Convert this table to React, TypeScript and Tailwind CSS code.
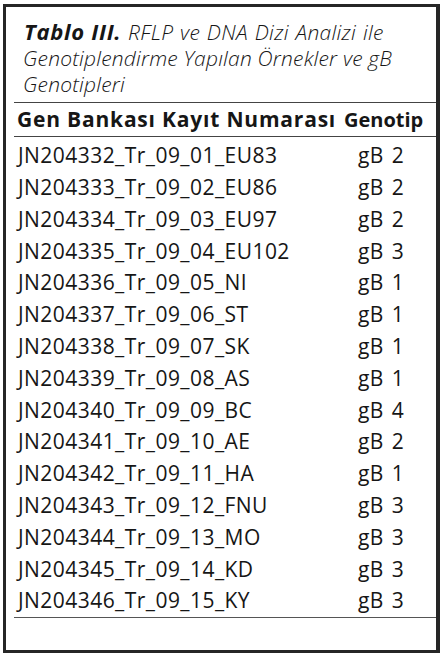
const rows: [string, string][] = [
  ['JN204332_Tr_09_01_EU83', 'gB 2'],
  ['JN204333_Tr_09_02_EU86', 'gB 2'],
  ['JN204334_Tr_09_03_EU97', 'gB 2'],
  ['JN204335_Tr_09_04_EU102', 'gB 3'],
  ['JN204336_Tr_09_05_NI', 'gB 1'],
  ['JN204337_Tr_09_06_ST', 'gB 1'],
  ['JN204338_Tr_09_07_SK', 'gB 1'],
  ['JN204339_Tr_09_08_AS', 'gB 1'],
  ['JN204340_Tr_09_09_BC', 'gB 4'],
  ['JN204341_Tr_09_10_AE', 'gB 2'],
  ['JN204342_Tr_09_11_HA', 'gB 1'],
  ['JN204343_Tr_09_12_FNU', 'gB 3'],
  ['JN204344_Tr_09_13_MO', 'gB 3'],
  ['JN204345_Tr_09_14_KD', 'gB 3'],
  ['JN204346_Tr_09_15_KY', 'gB 3'],
]

export default function App() {
  return (
    <div className="w-[444px] h-[660px] bg-white pt-[4px] pl-[3px] font-['Open_Sans',sans-serif] text-[#161616]">
      <div className="w-[437px] h-[649px] border-[3px] border-r-[4px] border-[#262626] flex flex-col">
        {/* caption */}
        <div className="pl-[17px] pr-2 pt-[11px] pb-[5px] text-[21px] leading-[26px] italic tracking-[0.2px] font-light">
          <div className="whitespace-nowrap">
            <span className="font-bold text-[22px] tracking-[0.7px] pl-[1px]">Tablo III.</span>
            <span className="tracking-[0.3px] [word-spacing:1px]"> RFLP ve DNA Dizi Analizi ile</span>
          </div>
          <div className="whitespace-nowrap">Genotiplendirme Yapılan Örnekler ve gB</div>
          <div>Genotipleri</div>
        </div>

        <div className="ml-[8px] border-t-[1.5px] border-[#444]">
          <div className="flex items-center h-[34px] border-b-[1.5px] border-[#444] font-bold">
            <span className="pl-[3px] w-[330px] text-[21px] tracking-[0.8px] whitespace-nowrap">Gen Bankası Kayıt Numarası</span>
            <span className="text-[20px]">Genotip</span>
          </div>

          <div className="pt-[3px] border-b-[1.5px] border-[#555]">
            {rows.map(([id, g]) => (
              <div key={id} className="flex items-center h-[31.8px] text-[21px] tracking-[0.45px]">
                <span className="pl-[4px] w-[344px]">{id}</span>
                <span className="[word-spacing:2px]">{g}</span>
              </div>
            ))}
          </div>
        </div>
      </div>
    </div>
  )
}
